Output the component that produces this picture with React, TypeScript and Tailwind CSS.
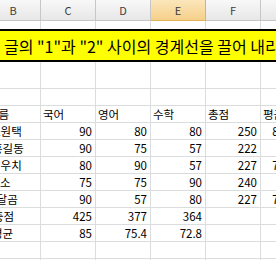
import React from 'react';

const font = "font-['Noto_Sans_CJK_KR','Noto_Sans',sans-serif]";

type Row = { name: string; nameX: string; vals: string[] };

const rows: Row[] = [
  { name: '', nameX: '', vals: ['', '', '', '', ''] },
  { name: '이름', nameX: 'ml-[2px]', vals: ['국어', '영어', '수학', '총점', '평균'] },
  { name: '조원택', nameX: 'ml-[4px]', vals: ['90', '80', '80', '250', '83.33333'] },
  { name: '홍길동', nameX: 'ml-[6px]', vals: ['90', '75', '57', '222', '74'] },
  { name: '전우치', nameX: 'ml-[4px]', vals: ['80', '90', '57', '227', '75.66667'] },
  { name: '소', nameX: 'ml-[14px]', vals: ['75', '75', '90', '240', '80'] },
  { name: '반달곰', nameX: 'ml-[0px]', vals: ['90', '57', '80', '227', '75.66667'] },
  { name: '총점', nameX: 'ml-[7px]', vals: ['425', '377', '364', '', ''] },
  { name: '평균', nameX: 'ml-[6px]', vals: ['85', '75.4', '72.8', '', ''] },
  { name: '', nameX: '', vals: ['', '', '', '', ''] },
  { name: '', nameX: '', vals: ['', '', '', '', ''] },
];

const letters = ['B', 'C', 'D', 'E', 'F', 'G'];

export default function App() {
  return (
    <div className={`relative w-[276px] h-[260px] overflow-hidden bg-white text-black ${font}`}>
      <div className="ml-[-14px] flex flex-col w-[330px]">
        {/* Column headers */}
        <div className="flex">
          {letters.map(l => (
            <div
              key={l}
              className={`w-[55px] h-[21px] shrink-0 border-r border-b flex items-center justify-center text-[11px] text-[#3c3c3c] ${
                l === 'E'
                  ? 'bg-gradient-to-b from-[#fbe6bb] to-[#f6d08a] border-[#e3b35a]'
                  : 'bg-gradient-to-b from-[#f8f8f8] to-[#e7e7e7] border-[#c6c6c6]'
              }`}
            >
              {l}
            </div>
          ))}
        </div>

        {/* Tall first row under the text box */}
        <div className="flex">
          {letters.map(l => (
            <div key={l} className="w-[55px] h-[68px] shrink-0 border-r border-b border-[#dadcdd]" />
          ))}
        </div>

        {rows.map((r, i) => (
          <div key={i} className="flex text-[11.5px] leading-[16px]">
            <div className="w-[55px] h-[17px] shrink-0 border-r border-b border-[#dadcdd] whitespace-nowrap">
              <span className={`inline-block ${r.nameX}`}>{r.name}</span>
            </div>
            {r.vals.map((v, j) => {
              const isText = i === 1;
              const align = isText ? 'pl-[2px] text-left' : 'pr-[3px] text-right';
              return (
                <div
                  key={j}
                  className={`w-[55px] h-[17px] shrink-0 border-r border-b border-[#dadcdd] whitespace-nowrap ${align}`}
                >
                  {!isText && j === 4 ? <span className="inline-block mr-[-8px]">{v}</span> : v}
                </div>
              );
            })}
          </div>
        ))}
      </div>

      {/* Floating text box */}
      <div className="absolute top-[29px] left-[-4px] w-[290px] h-[33px] border-2 border-black bg-[#ffff00] flex items-center pl-[6px] whitespace-nowrap text-[16px]">
        글의 "1"과 "2" 사이의 경계선을 끌어 내리면
      </div>
    </div>
  );
}
